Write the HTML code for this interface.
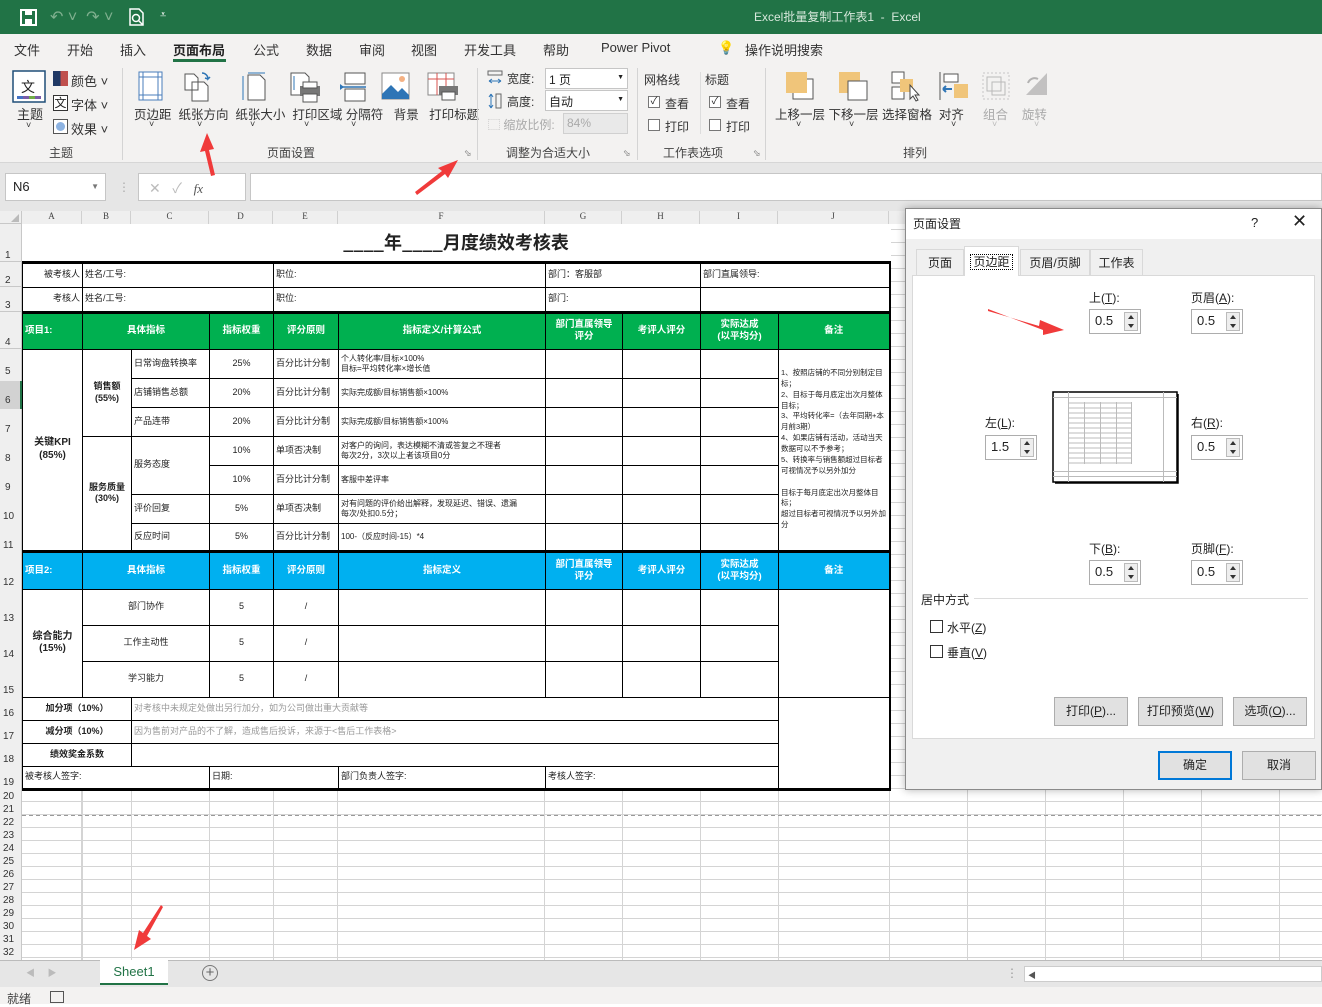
<!DOCTYPE html>
<html><head><meta charset="utf-8">
<style>
*{margin:0;padding:0;box-sizing:border-box}
body{width:1322px;height:1004px;position:relative;overflow:hidden;background:#fff;font-family:"Liberation Sans","Noto Sans CJK SC",sans-serif;font-size:12px;color:#222}
.a{position:absolute;white-space:nowrap}
#title{left:0;top:0;width:1322px;height:34px;background:#217346}
#tabs{left:0;top:34px;width:1322px;height:28px;background:#f3f2f1}
#ribbon{left:0;top:62px;width:1322px;height:101px;background:#f3f2f1;border-bottom:1px solid #d6d6d6}
.t{font-size:13px;color:#333;top:40px}
.lab{font-size:12px;color:#333}
.grp{font-size:12px;color:#444;top:144px}
.sep{width:1px;background:#d4d4d4;top:68px;height:92px}
.combo{background:#fff;border:1px solid #c6c6c6;height:21px;font-size:12px;padding:2px 3px}
.cb{width:12px;height:12px;border:1px solid #777;background:#fff}
table{border-collapse:collapse;table-layout:fixed;position:absolute;left:22px;top:224px;background:#fff}
td{border:1px solid #000;font-size:9px;overflow:hidden;padding:0 2px;line-height:1.25}
.c{text-align:center}
.g td.h{background:#00b050;color:#fff;font-weight:bold;text-align:center;font-size:9.5px}
.b td.h{background:#00b0f0;color:#fff;font-weight:bold;text-align:center;font-size:9.5px}
.bold{font-weight:bold}
.grey{color:#999}
.rh{left:0;width:22px;font-size:10px;color:#333;text-align:left;padding-left:5px}
.ch{top:211px;height:13px;font-size:9px;color:#444;text-align:center;border-right:1px solid #d0d0d0;background:#efefef;font-family:"Liberation Serif",serif}
.spin{position:absolute;width:52px;height:25px;background:#fff;border:1px solid #adadad;font-size:13px;padding:3px 5px}
.spin i{position:absolute;right:2px;top:2px;width:14px;height:19px;border:1px solid #bbb;background:#eee}
.spin i:before{content:"";position:absolute;left:3px;top:2px;border:3px solid transparent;border-bottom:4px solid #333;border-top:0}
.spin i:after{content:"";position:absolute;left:3px;bottom:2px;border:3px solid transparent;border-top:4px solid #333;border-bottom:0}
.btn{position:absolute;height:29px;background:#e1e1e1;border:1px solid #adadad;font-size:12px;text-align:center;line-height:27px}
.dl{font-size:12px;color:#222}
</style></head><body>

<div id="title" class="a">
 <svg class="a" style="left:20px;top:9px" width="18" height="17"><rect x="1" y="1" width="15" height="15" fill="none" stroke="#fff" stroke-width="2"/><rect x="5" y="1" width="7" height="5" fill="#fff"/><rect x="5" y="10" width="7" height="6" fill="#fff"/></svg>
 <div class="a" style="left:50px;top:7px;color:#7fb08f;font-size:16px">↶ ˅&nbsp; ↷ ˅</div>
 <svg class="a" style="left:128px;top:8px" width="18" height="19"><path d="M2 1h9l4 4v12H2z" fill="none" stroke="#fff" stroke-width="1.5"/><circle cx="8" cy="10" r="3.5" fill="none" stroke="#fff" stroke-width="1.5"/><path d="M10.5 12.5l4 4" stroke="#fff" stroke-width="1.5"/></svg>
 <div class="a" style="left:160px;top:9px;color:#fff;font-size:11px">⩡</div>
 <div class="a" style="left:754px;top:8px;color:#d8e8dc;font-size:12px">Excel批量复制工作表1&nbsp; - &nbsp;Excel</div>
</div>

<div id="tabs" class="a">
 <div class="a t" style="left:14px;top:6px">文件</div>
 <div class="a t" style="left:67px;top:6px">开始</div>
 <div class="a t" style="left:120px;top:6px">插入</div>
 <div class="a t" style="left:173px;top:6px;font-weight:bold;color:#222">页面布局</div>
 <div class="a" style="left:173px;top:25px;width:53px;height:3px;background:#217346"></div>
 <div class="a t" style="left:253px;top:6px">公式</div>
 <div class="a t" style="left:306px;top:6px">数据</div>
 <div class="a t" style="left:359px;top:6px">审阅</div>
 <div class="a t" style="left:411px;top:6px">视图</div>
 <div class="a t" style="left:464px;top:6px">开发工具</div>
 <div class="a t" style="left:543px;top:6px">帮助</div>
 <div class="a t" style="left:601px;top:6px">Power Pivot</div>
 <div class="a t" style="left:718px;top:6px">💡</div>
 <div class="a t" style="left:745px;top:6px">操作说明搜索</div>
</div>

<div id="ribbon" class="a"></div>
<!-- theme group -->
<svg class="a" style="left:12px;top:70px" width="34" height="33"><rect x="1" y="1" width="32" height="31" fill="#fff" stroke="#1f4e79" stroke-width="1.5"/><text x="9" y="22" font-size="14" fill="#222" font-family="Noto Sans CJK SC">文</text><rect x="5" y="26" width="24" height="3" fill="#7a5ca8"/><rect x="5" y="26" width="6" height="3" fill="#4472c4"/><rect x="17" y="26" width="6" height="3" fill="#70ad47"/></svg>
<div class="a lab" style="left:17px;top:104px;font-size:13px">主题</div>
<div class="a lab" style="left:26px;top:120px;font-size:9px">˅</div>
<div class="a" style="left:53px;top:71px;width:15px;height:15px;background:linear-gradient(90deg,#1f3864 50%,#c0504d 50%)"></div>
<div class="a lab" style="left:71px;top:71px;font-size:13px">颜色 ˅</div>
<div class="a" style="left:53px;top:95px;width:15px;height:16px;border:1px solid #333;font-size:12px;line-height:14px;text-align:center;background:#fff">文</div>
<div class="a lab" style="left:71px;top:95px;font-size:13px">字体 ˅</div>
<div class="a" style="left:53px;top:119px;width:15px;height:15px;border:1px solid #555;background:#fff"><div style="margin:2px;width:9px;height:9px;border-radius:50%;background:#8db3e2"></div></div>
<div class="a lab" style="left:71px;top:119px;font-size:13px">效果 ˅</div>
<div class="a grp" style="left:49px">主题</div>
<div class="a sep" style="left:122px"></div>

<!-- page setup group -->
<svg class="a" style="left:138px;top:71px" width="28" height="30"><rect x="1" y="1" width="23" height="28" fill="#fff" stroke="#4a7ebb"/><path d="M5 1v28M20 1v28M1 6h23M1 24h23" stroke="#4a7ebb"/></svg>
<svg class="a" style="left:184px;top:70px" width="32" height="32"><path d="M1 4h9l4 4v12H1z M8 12h12l4 4v15H8z" fill="#fff" stroke="#555"/><path d="M18 3a6 6 0 0 1 6 6l2-2M24 9l-3-1" fill="none" stroke="#2e75b6" stroke-width="1.5"/></svg>
<svg class="a" style="left:240px;top:72px" width="28" height="30"><path d="M8 3h12l5 5v20H8z" fill="#fff" stroke="#555"/><path d="M8 1h17M3 4v24" stroke="#2e75b6"/></svg>
<svg class="a" style="left:290px;top:72px" width="32" height="32"><path d="M1 1h14l4 4v18H1z" fill="#fff" stroke="#555"/><rect x="10" y="14" width="20" height="10" fill="#777"/><rect x="13" y="10" width="14" height="6" fill="#fff" stroke="#555"/><rect x="13" y="22" width="14" height="8" fill="#fff" stroke="#555"/><path d="M4 4v14" stroke="#2e75b6"/></svg>
<svg class="a" style="left:339px;top:72px" width="28" height="30"><rect x="6" y="1" width="20" height="11" fill="#fff" stroke="#555"/><rect x="6" y="17" width="20" height="12" fill="#fff" stroke="#555"/><path d="M1 15h26" stroke="#2e75b6" stroke-width="1.5"/><path d="M1 12l4 3-4 3z" fill="#2e75b6"/></svg>
<svg class="a" style="left:381px;top:72px" width="30" height="28"><rect x="1" y="1" width="27" height="26" fill="#fff" stroke="#888"/><path d="M1 22l9-9 7 7 4-4 7 7v4H1z" fill="#2e75b6"/><circle cx="21" cy="7" r="3" fill="#f4b183"/></svg>
<svg class="a" style="left:427px;top:72px" width="32" height="30"><rect x="1" y="1" width="26" height="22" fill="#fff" stroke="#888"/><path d="M1 7h26M10 1v22M19 1v22" stroke="#d9534f"/><rect x="12" y="14" width="19" height="9" fill="#777"/><rect x="15" y="20" width="13" height="8" fill="#fff" stroke="#555"/></svg>
<div class="a lab" style="left:134px;top:104px;font-size:12.5px">页边距 &nbsp;纸张方向 &nbsp;纸张大小 &nbsp;打印区域 分隔符 &nbsp;&nbsp;背景 &nbsp;&nbsp;打印标题</div>
<div class="a lab" style="left:149px;top:119px;font-size:9px">˅</div>
<div class="a lab" style="left:197px;top:119px;font-size:9px">˅</div>
<div class="a lab" style="left:250px;top:119px;font-size:9px">˅</div>
<div class="a lab" style="left:304px;top:119px;font-size:9px">˅</div>
<div class="a lab" style="left:351px;top:119px;font-size:9px">˅</div>
<div class="a grp" style="left:267px">页面设置</div>
<div class="a" style="left:464px;top:148px;font-size:9px;color:#666">⬂</div>
<div class="a sep" style="left:477px"></div>

<!-- scale -->
<svg class="a" style="left:487px;top:70px" width="16" height="16"><rect x="1" y="1" width="14" height="4" fill="none" stroke="#666"/><path d="M2 11h12M2 11l3-2M2 11l3 2M14 11l-3-2M14 11l-3 2" stroke="#2e75b6"/></svg>
<div class="a lab" style="left:507px;top:70px">宽度:</div>
<div class="a combo" style="left:545px;top:68px;width:83px">1 页<span style="float:right;font-size:7px;margin-top:3px">▼</span></div>
<svg class="a" style="left:487px;top:93px" width="16" height="16"><rect x="9" y="1" width="5" height="14" fill="none" stroke="#666"/><path d="M4 1v14M4 1l-2 3M4 1l2 3M4 15l-2-3M4 15l2-3" stroke="#2e75b6"/></svg>
<div class="a lab" style="left:507px;top:93px">高度:</div>
<div class="a combo" style="left:545px;top:90px;width:83px">自动<span style="float:right;font-size:7px;margin-top:3px">▼</span></div>
<div class="a lab" style="left:488px;top:116px;color:#aaa">⬚ 缩放比例:</div>
<div class="a combo" style="left:563px;top:113px;width:65px;background:#e9e9e9;color:#aaa;border-color:#d0d0d0">84%</div>
<div class="a grp" style="left:506px">调整为合适大小</div>
<div class="a" style="left:623px;top:148px;font-size:9px;color:#666">⬂</div>
<div class="a sep" style="left:637px"></div>

<!-- sheet options -->
<div class="a lab" style="left:644px;top:71px">网格线</div>
<div class="a lab" style="left:705px;top:71px">标题</div>
<div class="a cb" style="left:648px;top:96px;font-size:10px;line-height:10px;text-align:center">✓</div>
<div class="a lab" style="left:665px;top:95px">查看</div>
<div class="a cb" style="left:648px;top:119px"></div>
<div class="a lab" style="left:665px;top:118px">打印</div>
<div class="a" style="left:700px;top:72px;width:1px;height:62px;background:#ddd"></div>
<div class="a cb" style="left:709px;top:96px;font-size:10px;line-height:10px;text-align:center">✓</div>
<div class="a lab" style="left:726px;top:95px">查看</div>
<div class="a cb" style="left:709px;top:119px"></div>
<div class="a lab" style="left:726px;top:118px">打印</div>
<div class="a grp" style="left:663px">工作表选项</div>
<div class="a" style="left:753px;top:148px;font-size:9px;color:#666">⬂</div>
<div class="a sep" style="left:765px"></div>

<!-- arrange -->
<svg class="a" style="left:785px;top:71px" width="30" height="30"><rect x="8" y="8" width="20" height="20" fill="#fff" stroke="#555"/><rect x="1" y="1" width="21" height="21" fill="#f0c57a"/></svg>
<svg class="a" style="left:838px;top:71px" width="30" height="30"><rect x="1" y="1" width="21" height="21" fill="#f0c57a"/><rect x="10" y="10" width="19" height="19" fill="#fff" stroke="#555"/></svg>
<svg class="a" style="left:891px;top:71px" width="30" height="32"><rect x="1" y="1" width="12" height="11" fill="#fff" stroke="#555"/><rect x="1" y="16" width="12" height="12" fill="#fff" stroke="#555"/><rect x="9" y="8" width="13" height="13" fill="#f0c57a"/><path d="M19 14v14l3-3 3 5 2-1-3-5h4z" fill="#fff" stroke="#444"/></svg>
<svg class="a" style="left:939px;top:71px" width="30" height="30"><path d="M1 1v28" stroke="#555"/><rect x="5" y="3" width="14" height="8" fill="#fff" stroke="#555"/><rect x="15" y="13" width="14" height="14" fill="#f0c57a"/><path d="M4 18h9M4 18l3-3M4 18l3 3" stroke="#2e75b6" stroke-width="2"/></svg>
<svg class="a" style="left:981px;top:71px" width="30" height="30" opacity=".4"><rect x="2" y="2" width="26" height="26" fill="none" stroke="#888" stroke-dasharray="2"/><rect x="6" y="6" width="14" height="14" fill="none" stroke="#666"/><rect x="11" y="11" width="13" height="13" fill="none" stroke="#666"/></svg>
<svg class="a" style="left:1023px;top:71px" width="30" height="30" opacity=".45"><path d="M3 24L24 2v22z" fill="#888"/><path d="M5 12a7 7 0 0 1 10-4" fill="none" stroke="#666" stroke-width="2"/></svg>
<div class="a lab" style="left:775px;top:104px;font-size:12.5px">上移一层 下移一层 选择窗格 &nbsp;对齐</div>
<div class="a lab" style="left:983px;top:104px;font-size:12.5px;color:#aaa">组合 &nbsp;&nbsp;&nbsp;旋转</div>
<div class="a lab" style="left:796px;top:119px;font-size:9px">˅</div>
<div class="a lab" style="left:849px;top:119px;font-size:9px">˅</div>
<div class="a lab" style="left:951px;top:119px;font-size:9px">˅</div>
<div class="a lab" style="left:992px;top:119px;font-size:9px;color:#bbb">˅</div>
<div class="a lab" style="left:1034px;top:119px;font-size:9px;color:#bbb">˅</div>
<div class="a grp" style="left:903px">排列</div>

<!-- formula bar -->
<div class="a" style="left:0;top:163px;width:1322px;height:48px;background:#e6e6e6"></div>
<div class="a" style="left:5px;top:173px;width:101px;height:28px;background:#fff;border:1px solid #c6c6c6;font-size:13px;padding:5px 7px">N6<span style="position:absolute;right:6px;top:8px;font-size:8px;color:#777">▼</span></div>
<div class="a" style="left:118px;top:180px;color:#aaa;font-size:12px">⋮</div>
<div class="a" style="left:138px;top:173px;width:108px;height:28px;background:#fff;border:1px solid #c6c6c6;font-size:14px;padding:4px 10px;color:#bbb">✕ &nbsp;&nbsp;✓ &nbsp;&nbsp;<i style="color:#555;font-family:'Liberation Serif',serif;font-size:13px">fx</i></div>
<div class="a" style="left:250px;top:173px;width:1072px;height:28px;background:#fff;border:1px solid #c6c6c6"></div>

<!-- sheet grid background -->
<div class="a" style="left:0;top:211px;width:1322px;height:749px;background:#fff"></div>
<div class="a" style="left:22px;top:224px;width:1300px;height:736px;background-image:linear-gradient(90deg,transparent 59px,#d4d4d4 59px,#d4d4d4 60px,transparent 60px),repeating-linear-gradient(180deg,transparent 0,transparent 12px,#d4d4d4 12px,#d4d4d4 13px);background-size:100% 100%,100% 13px;background-position:0 0,0 565px"></div>
<svg class="a" style="left:22px;top:224px" width="1300" height="736"><g stroke="#d4d4d4"><path d="M60.5 0v736M109.5 0v736M187.5 0v736M251.5 0v736M315.5 0v736M522.5 0v736M600.5 0v736M678.5 0v736M756.5 0v736M867.5 0v736M945.5 0v736M1023.5 0v736M1101.5 0v736M1179.5 0v736M1257.5 0v736"/></g><path d="M0 591.5H1300" stroke="#999" stroke-dasharray="4 3"/></svg>
<!-- col headers -->
<div class="a" style="left:0;top:211px;width:1322px;height:13px;background:#efefef;border-bottom:1px solid #c8c8c8"></div>
<div class="a" style="left:0;top:211px;width:22px;height:13px;border-right:1px solid #c8c8c8"><div style="position:absolute;right:2px;bottom:2px;border:4px solid transparent;border-right-color:#bbb;border-bottom-color:#bbb"></div></div>
<div class="a ch" style="left:22px;width:60px">A</div>
<div class="a ch" style="left:82px;width:49px">B</div>
<div class="a ch" style="left:131px;width:78px">C</div>
<div class="a ch" style="left:209px;width:64px">D</div>
<div class="a ch" style="left:273px;width:65px">E</div>
<div class="a ch" style="left:338px;width:207px">F</div>
<div class="a ch" style="left:545px;width:77px">G</div>
<div class="a ch" style="left:622px;width:78px">H</div>
<div class="a ch" style="left:700px;width:78px">I</div>
<div class="a ch" style="left:778px;width:111px">J</div>
<div class="a ch" style="left:889px;width:78px">K</div>
<!-- row headers -->
<div class="a" style="left:0;top:224px;width:22px;height:736px;background:#efefef;border-right:1px solid #c8c8c8;background-image:linear-gradient(180deg,transparent 37px,#c8c8c8 37px,#c8c8c8 38px,transparent 38px,transparent 62px,#c8c8c8 62px,#c8c8c8 63px,transparent 63px,transparent 87px,#c8c8c8 87px,#c8c8c8 88px,transparent 88px,transparent 124px,#c8c8c8 124px,#c8c8c8 125px,transparent 125px)"></div>
<div class="a" style="left:0;top:381px;width:22px;height:28px;background:#d2d2d2;border-right:2px solid #217346"></div>

<div class="a rh" style="top:250px">1</div>
<div class="a rh" style="top:275px">2</div>
<div class="a rh" style="top:300px">3</div>
<div class="a rh" style="top:337px">4</div>
<div class="a rh" style="top:366px">5</div>
<div class="a rh" style="top:395px">6</div>
<div class="a rh" style="top:424px">7</div>
<div class="a rh" style="top:453px">8</div>
<div class="a rh" style="top:482px">9</div>
<div class="a rh" style="top:511px;padding-left:3px">10</div>
<div class="a rh" style="top:540px;padding-left:3px">11</div>
<div class="a rh" style="top:577px;padding-left:3px">12</div>
<div class="a rh" style="top:613px;padding-left:3px">13</div>
<div class="a rh" style="top:649px;padding-left:3px">14</div>
<div class="a rh" style="top:685px;padding-left:3px">15</div>
<div class="a rh" style="top:708px;padding-left:3px">16</div>
<div class="a rh" style="top:731px;padding-left:3px">17</div>
<div class="a rh" style="top:754px;padding-left:3px">18</div>
<div class="a rh" style="top:777px;padding-left:3px">19</div>
<div class="a" style="left:3px;top:790px;font-size:10px;line-height:13px;color:#333">20<br>21<br>22<br>23<br>24<br>25<br>26<br>27<br>28<br>29<br>30<br>31<br>32</div>

<table>
<colgroup><col style="width:60px"><col style="width:49px"><col style="width:78px"><col style="width:64px"><col style="width:65px"><col style="width:207px"><col style="width:77px"><col style="width:78px"><col style="width:78px"><col style="width:111px"></colgroup>
<tr style="height:38px"><td colspan="10" class="c" style="border:none;border-bottom:3px solid #000;font-size:18px;font-weight:bold;font-family:'Noto Sans CJK SC',sans-serif">____年____月度绩效考核表</td></tr>
<tr style="height:25px"><td style="text-align:right">被考核人</td><td colspan="3">姓名/工号:</td><td colspan="2">职位:</td><td colspan="2">部门：客服部</td><td colspan="2" style="border-right:2px solid #000">部门直属领导:</td></tr>
<tr style="height:25px"><td style="text-align:right;border-bottom:3px solid #000">考核人</td><td colspan="3" style="border-bottom:3px solid #000">姓名/工号:</td><td colspan="2" style="border-bottom:3px solid #000">职位:</td><td colspan="2" style="border-bottom:3px solid #000">部门:</td><td colspan="2" style="border-bottom:3px solid #000;border-right:2px solid #000"></td></tr>
<tr class="g" style="height:37px"><td class="h" style="text-align:left">项目1:</td><td class="h" colspan="2">具体指标</td><td class="h">指标权重</td><td class="h">评分原则</td><td class="h">指标定义/计算公式</td><td class="h">部门直属领导<br>评分</td><td class="h">考评人评分</td><td class="h">实际达成<br>(以平均分)</td><td class="h" style="border-right:2px solid #000">备注</td></tr>
<tr style="height:29px"><td rowspan="7" class="c bold" style="font-size:10px">关键KPI<br>(85%)</td><td rowspan="3" class="c bold">销售额<br>(55%)</td><td>日常询盘转换率</td><td class="c">25%</td><td>百分比计分制</td><td style="font-size:8px">个人转化率/目标×100%<br>目标=平均转化率×增长值</td><td></td><td></td><td></td><td rowspan="7" style="font-size:7.5px;vertical-align:middle;border-right:2px solid #000;line-height:1.45">1、按照店铺的不同分别制定目标；<br>2、目标于每月底定出次月整体目标；<br>3、平均转化率=（去年同期+本月前3期）<br>4、如果店铺有活动，活动当天数据可以不予参考；<br>5、转换率与销售额超过目标者可视情况予以另外加分<br><br>目标于每月底定出次月整体目标；<br>超过目标者可视情况予以另外加分</td></tr>
<tr style="height:29px"><td>店铺销售总额</td><td class="c">20%</td><td>百分比计分制</td><td style="font-size:8px">实际完成额/目标销售额×100%</td><td></td><td></td><td></td></tr>
<tr style="height:29px"><td>产品连带</td><td class="c">20%</td><td>百分比计分制</td><td style="font-size:8px">实际完成额/目标销售额×100%</td><td></td><td></td><td></td></tr>
<tr style="height:29px"><td rowspan="4" class="c bold">服务质量<br>(30%)</td><td rowspan="2">服务态度</td><td class="c">10%</td><td>单项否决制</td><td style="font-size:8px">对客户的询问，表达模糊不清或答复之不理者<br>每次2分，3次以上者该项目0分</td><td></td><td></td><td></td></tr>
<tr style="height:29px"><td class="c">10%</td><td>百分比计分制</td><td style="font-size:8px">客服中差评率</td><td></td><td></td><td></td></tr>
<tr style="height:29px"><td>评价回复</td><td class="c">5%</td><td>单项否决制</td><td style="font-size:8px">对有问题的评价给出解释，发现延迟、错误、遗漏<br>每次/处扣0.5分；</td><td></td><td></td><td></td></tr>
<tr style="height:28px"><td>反应时间</td><td class="c">5%</td><td>百分比计分制</td><td style="font-size:8px">100-（反应时间-15）*4</td><td></td><td></td><td></td></tr>
<tr class="b" style="height:38px;border-top:3px solid #000"><td class="h" style="text-align:left">项目2:</td><td class="h" colspan="2">具体指标</td><td class="h">指标权重</td><td class="h">评分原则</td><td class="h">指标定义</td><td class="h">部门直属领导<br>评分</td><td class="h">考评人评分</td><td class="h">实际达成<br>(以平均分)</td><td class="h" style="border-right:2px solid #000">备注</td></tr>
<tr style="height:36px"><td rowspan="3" class="c bold" style="font-size:10px">综合能力<br>(15%)</td><td colspan="2" class="c">部门协作</td><td class="c">5</td><td class="c">/</td><td></td><td></td><td></td><td></td><td rowspan="3" style="border-right:2px solid #000"></td></tr>
<tr style="height:36px"><td colspan="2" class="c">工作主动性</td><td class="c">5</td><td class="c">/</td><td></td><td></td><td></td><td></td></tr>
<tr style="height:36px"><td colspan="2" class="c">学习能力</td><td class="c">5</td><td class="c">/</td><td></td><td></td><td></td><td></td></tr>
<tr style="height:23px"><td colspan="2" class="c bold">加分项（10%）</td><td colspan="7" class="grey">对考核中未规定处做出另行加分，如为公司做出重大贡献等</td><td rowspan="4" style="border-right:2px solid #000;border-bottom:3px solid #000"></td></tr>
<tr style="height:23px"><td colspan="2" class="c bold">减分项（10%）</td><td colspan="7" class="grey">因为售前对产品的不了解，造成售后投诉，来源于&lt;售后工作表格&gt;</td></tr>
<tr style="height:23px"><td colspan="2" class="c bold">绩效奖金系数</td><td colspan="7"></td></tr>
<tr style="height:23px;border-bottom:3px solid #000"><td colspan="3">被考核人签字:</td><td colspan="2">日期:</td><td>部门负责人签字:</td><td colspan="3">考核人签字:</td></tr>
</table>

<!-- tab bar & status -->
<div class="a" style="left:0;top:960px;width:1322px;height:27px;background:#e6e6e6;border-top:1px solid #bbb"></div>
<div class="a" style="left:26px;top:966px;font-size:9px;color:#bbb">◀ &nbsp;&nbsp;&nbsp;&nbsp;▶</div>
<div class="a" style="left:100px;top:960px;width:68px;height:25px;background:#fff;border-bottom:2px solid #217346;color:#217346;font-size:13px;text-align:center;line-height:24px">Sheet1</div>
<div class="a" style="left:202px;top:965px;width:16px;height:16px;border:1px solid #777;border-radius:50%;text-align:center;line-height:13px;font-size:15px;color:#666">+</div>
<div class="a" style="left:1006px;top:966px;color:#999">⋮</div>
<div class="a" style="left:1024px;top:966px;width:298px;height:16px;background:#fff;border:1px solid #ccc"><span style="font-size:8px;color:#555;padding-left:3px">◀</span></div>
<div class="a" style="left:0;top:987px;width:1322px;height:17px;background:#f3f2f1"></div>
<div class="a" style="left:7px;top:990px;font-size:12px;color:#444">就绪</div>
<div class="a" style="left:50px;top:991px;width:14px;height:12px;border:1px solid #555"></div>

<!-- dialog -->
<div class="a" style="left:905px;top:208px;width:417px;height:582px;background:#f0f0f0;border:1px solid #8a8a8a;box-shadow:0 0 8px rgba(0,0,0,.3)">
 <div style="position:absolute;left:0;top:0;width:100%;height:30px;background:#fff"></div>
</div>
<div class="a dl" style="left:913px;top:215px">页面设置</div>
<div class="a dl" style="left:1251px;top:215px;font-size:13px">?</div>
<div class="a" style="left:1292px;top:211px;font-size:18px;color:#222">✕</div>
<div class="a" style="left:916px;top:249px;width:48px;height:26px;border:1px solid #d9d9d9;border-bottom:none;background:#f0f0f0;font-size:12px;text-align:center;line-height:26px">页面</div>
<div class="a" style="left:964px;top:246px;width:55px;height:30px;border:1px solid #d9d9d9;border-bottom:none;background:#fff;font-size:12px;text-align:center;line-height:30px;z-index:2"><span style="border:1px dotted #000;padding:0 2px">页边距</span></div>
<div class="a" style="left:1020px;top:249px;width:70px;height:26px;border:1px solid #d9d9d9;border-bottom:none;background:#f0f0f0;font-size:12px;text-align:center;line-height:26px">页眉/页脚</div>
<div class="a" style="left:1090px;top:249px;width:53px;height:26px;border:1px solid #d9d9d9;border-bottom:none;background:#f0f0f0;font-size:12px;text-align:center;line-height:26px">工作表</div>
<div class="a" style="left:912px;top:275px;width:403px;height:464px;background:#fff;border:1px solid #d9d9d9"></div>
<div class="a dl" style="left:1089px;top:289px">上(<u>T</u>):</div>
<div class="spin" style="left:1089px;top:309px">0.5<i></i></div>
<div class="a dl" style="left:1191px;top:289px">页眉(<u>A</u>):</div>
<div class="spin" style="left:1191px;top:309px">0.5<i></i></div>
<div class="a dl" style="left:985px;top:414px">左(<u>L</u>):</div>
<div class="spin" style="left:985px;top:435px">1.5<i></i></div>
<div class="a dl" style="left:1191px;top:414px">右(<u>R</u>):</div>
<div class="spin" style="left:1191px;top:435px">0.5<i></i></div>
<svg class="a" style="left:1052px;top:391px" width="127" height="93"><rect x="1" y="1" width="124" height="90" fill="#fff" stroke="#000" stroke-width="1.5"/><path d="M126 3v89H3" stroke="#000" stroke-width="1.5" fill="none"/><g stroke="#bbb" stroke-width="1"><path d="M1 6.5h124M1 85.5h124M1 80.5h124M16.5 1v90M111.5 1v90"/><path d="M16 12h63M16 17h63M16 22h63M16 27h63M16 32h63M16 37h63M16 42h63M16 47h63M16 52h63M16 57h63M16 62h63M16 67h63M16 72h63M32.5 11v62M48.5 11v62M64.5 11v62M79.5 11v62"/></g></svg>
<div class="a dl" style="left:1089px;top:540px">下(<u>B</u>):</div>
<div class="spin" style="left:1089px;top:560px">0.5<i></i></div>
<div class="a dl" style="left:1191px;top:540px">页脚(<u>F</u>):</div>
<div class="spin" style="left:1191px;top:560px">0.5<i></i></div>
<div class="a dl" style="left:921px;top:591px">居中方式</div>
<div class="a" style="left:974px;top:598px;width:334px;height:1px;background:#dcdcdc"></div>
<div class="a cb" style="left:930px;top:620px;width:13px;height:13px;border-color:#333"></div>
<div class="a dl" style="left:947px;top:619px">水平(<u>Z</u>)</div>
<div class="a cb" style="left:930px;top:645px;width:13px;height:13px;border-color:#333"></div>
<div class="a dl" style="left:947px;top:644px">垂直(<u>V</u>)</div>
<div class="btn" style="left:1054px;top:697px;width:74px">打印(<u>P</u>)...</div>
<div class="btn" style="left:1138px;top:697px;width:85px">打印预览(<u>W</u>)</div>
<div class="btn" style="left:1233px;top:697px;width:74px">选项(<u>O</u>)...</div>
<div class="btn" style="left:1158px;top:751px;width:74px;border:2px solid #0078d7;line-height:25px">确定</div>
<div class="btn" style="left:1242px;top:751px;width:74px">取消</div>

<!-- red arrows -->
<svg class="a" style="left:0;top:0" width="1322" height="1004">
<g fill="#f03a3a">
<polygon points="207,133 200,152 205,151 211,176 215,175 209,150 214,149"/>
<polygon points="458,160 438,168 442,171 415,192 417,195 445,174 448,178"/>
<polygon points="134,950 139,930 143,933 161,905 163,907 147,936 151,939"/>
<polygon points="1064,330 1043,335 1043,330 988,309 988,311 1039,326 1040,320"/>
</g></svg>
</body></html>
